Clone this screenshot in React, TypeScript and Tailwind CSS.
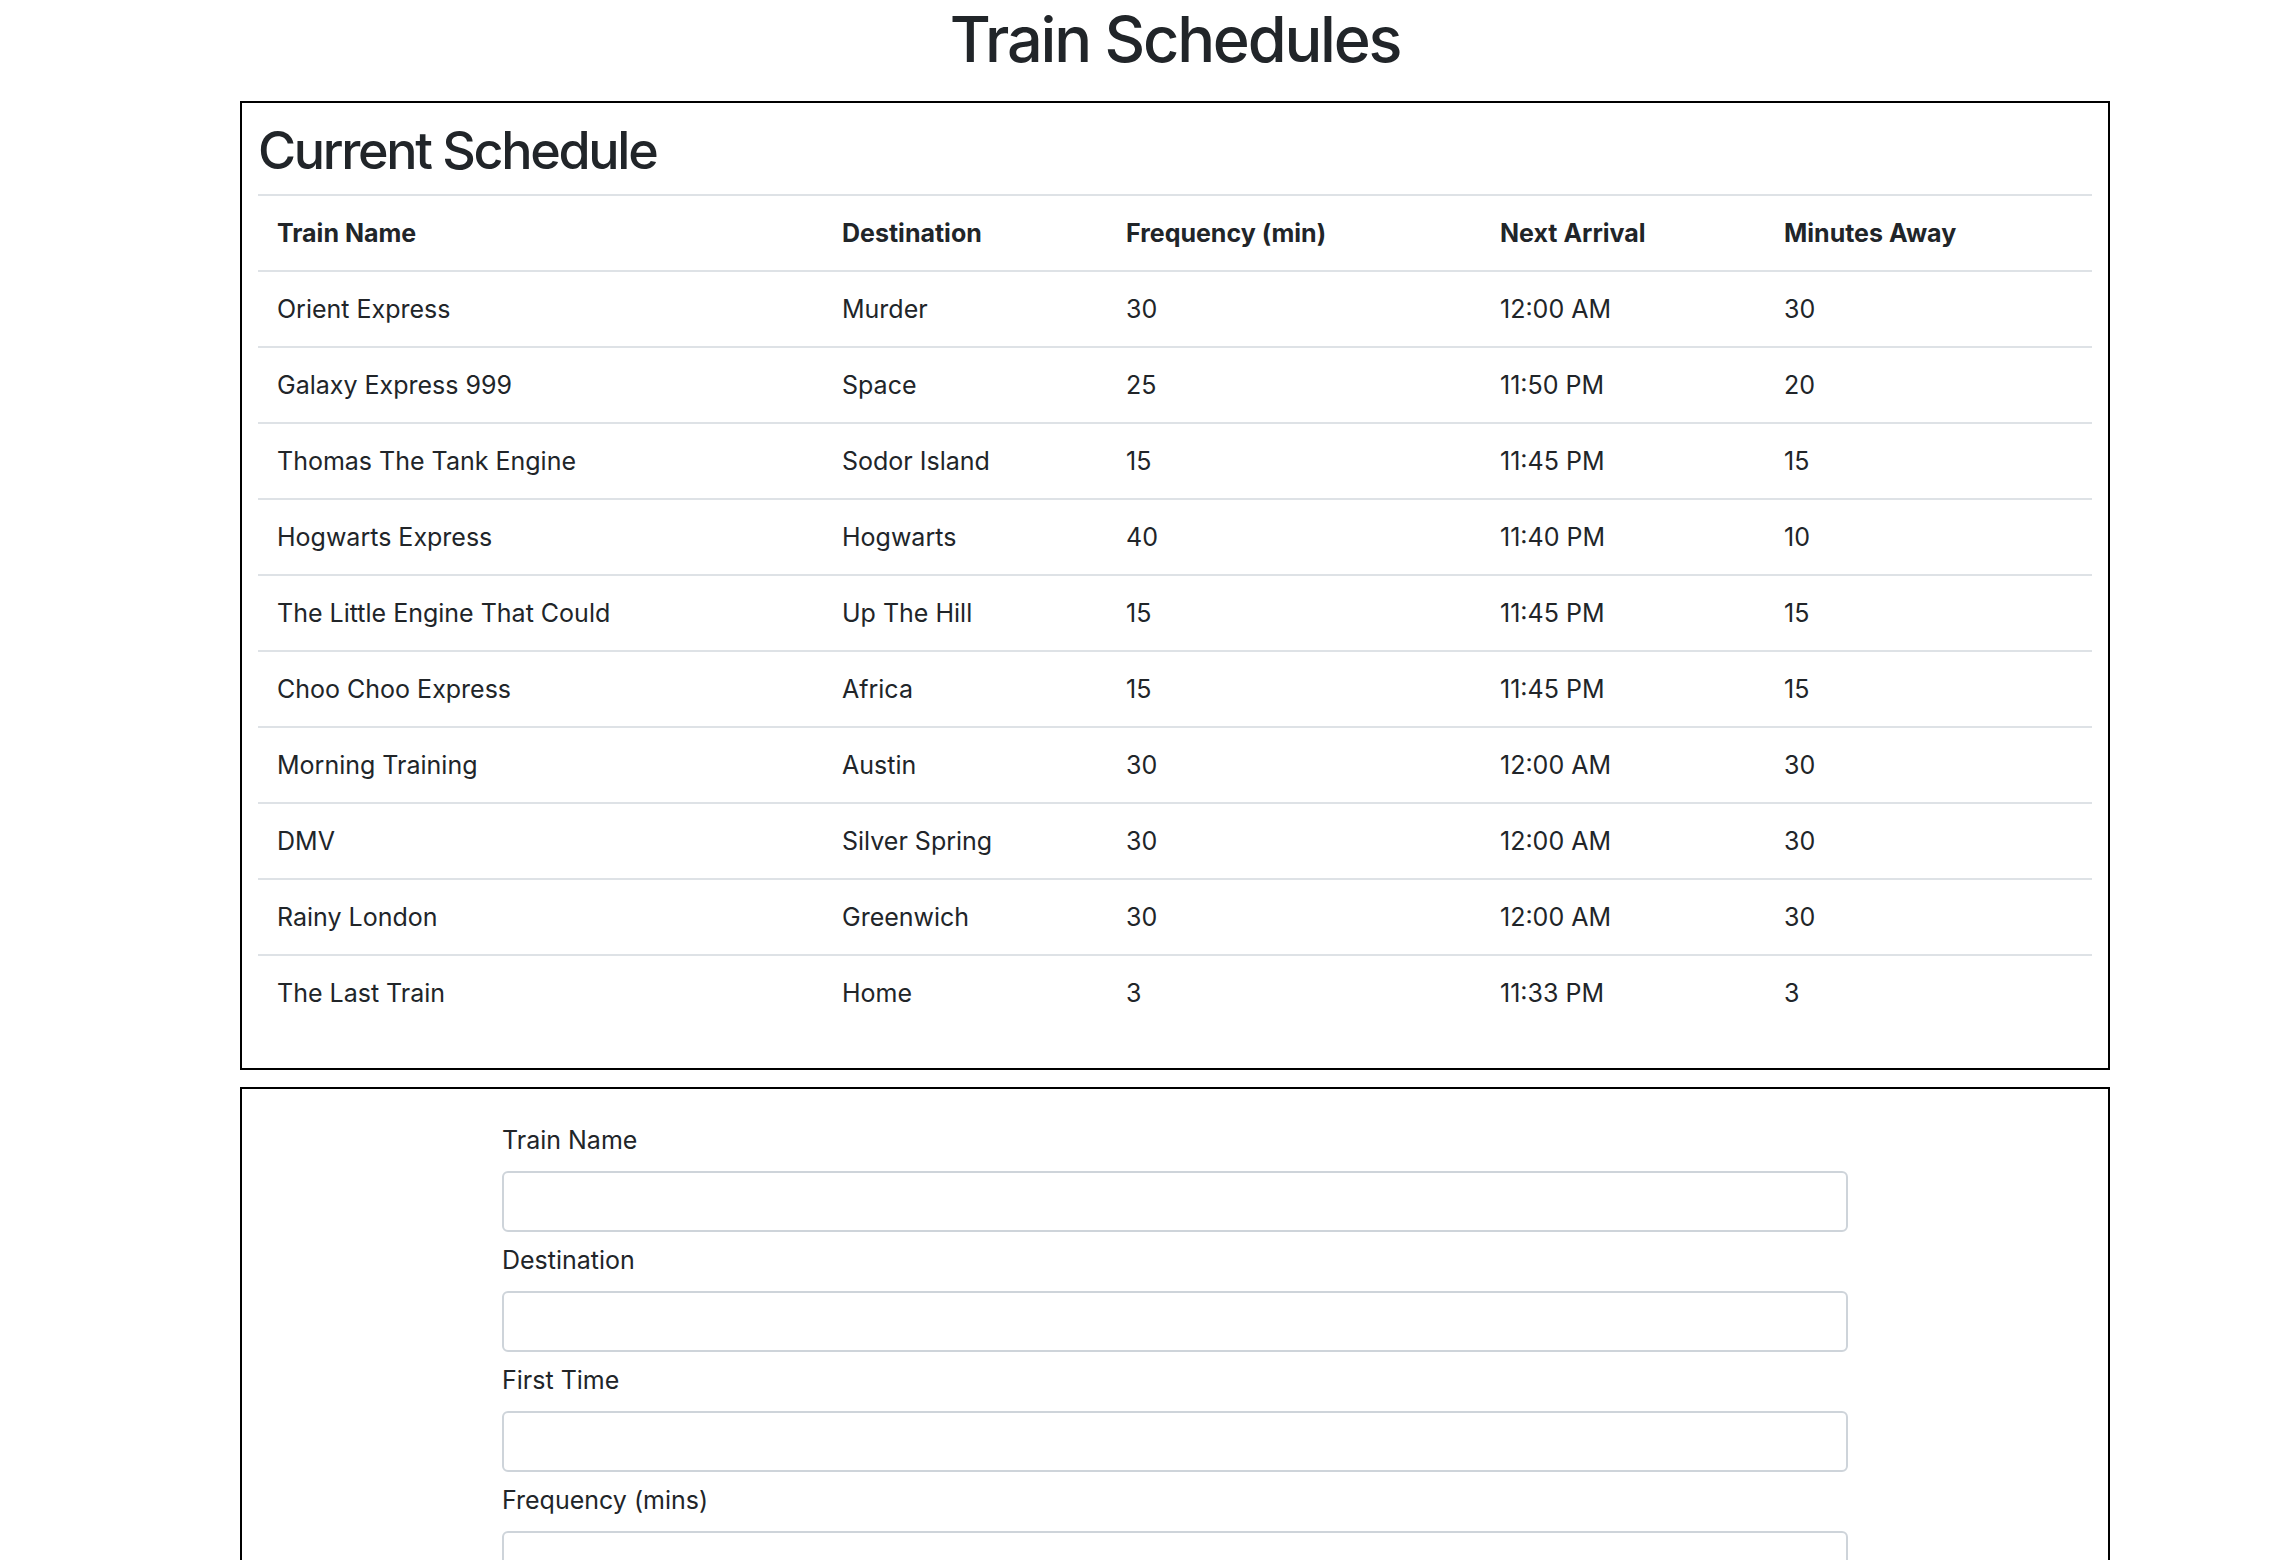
import React from 'react';

type Train = {
  name: string;
  destination: string;
  frequency: number;
  next: string;
  away: number;
};

const trains: Train[] = [
  { name: 'Orient Express', destination: 'Murder', frequency: 30, next: '12:00 AM', away: 30 },
  { name: 'Galaxy Express 999', destination: 'Space', frequency: 25, next: '11:50 PM', away: 20 },
  { name: 'Thomas The Tank Engine', destination: 'Sodor Island', frequency: 15, next: '11:45 PM', away: 15 },
  { name: 'Hogwarts Express', destination: 'Hogwarts', frequency: 40, next: '11:40 PM', away: 10 },
  { name: 'The Little Engine That Could', destination: 'Up The Hill', frequency: 15, next: '11:45 PM', away: 15 },
  { name: 'Choo Choo Express', destination: 'Africa', frequency: 15, next: '11:45 PM', away: 15 },
  { name: 'Morning Training', destination: 'Austin', frequency: 30, next: '12:00 AM', away: 30 },
  { name: 'DMV', destination: 'Silver Spring', frequency: 30, next: '12:00 AM', away: 30 },
  { name: 'Rainy London', destination: 'Greenwich', frequency: 30, next: '12:00 AM', away: 30 },
  { name: 'The Last Train', destination: 'Home', frequency: 3, next: '11:33 PM', away: 3 },
];

const fields = ['Train Name', 'Destination', 'First Time', 'Frequency (mins)'];

const cell = 'border-t-2 border-[#dee2e6] pl-[19px] pr-5 py-[19px] text-left align-top';

export default function App() {
  return (
    <div className="min-h-screen bg-white font-['Inter','Liberation_Sans',sans-serif] text-[25px] leading-[36px] text-[#212529]">
      <div className="ml-[240px] w-[1870px]">
        {/* Header */}
        <h1 className="text-center text-[63px] leading-[78px] font-medium tracking-[-2.2px]">Train Schedules</h1>

        {/* Schedule table */}
        <div className="mt-[23px] border-2 border-black px-[16px] pt-[17px] pb-[38px]">
          <h2 className="mb-[12px] text-[52px] leading-[1.2] font-medium tracking-[-2.3px]">Current Schedule</h2>
          <table className="w-full table-fixed border-collapse">
            <colgroup>
              <col className="w-[565px]" />
              <col className="w-[284px]" />
              <col className="w-[374px]" />
              <col className="w-[284px]" />
              <col className="w-[327px]" />
            </colgroup>
            <thead>
              <tr>
                <th className={`${cell} font-bold`}>Train Name</th>
                <th className={`${cell} font-bold`}>Destination</th>
                <th className={`${cell} font-bold`}>Frequency (min)</th>
                <th className={`${cell} font-bold`}>Next Arrival</th>
                <th className={`${cell} font-bold`}>Minutes Away</th>
              </tr>
            </thead>
            <tbody>
              {trains.map(t => (
                <tr key={t.name}>
                  <td className={cell}>{t.name}</td>
                  <td className={cell}>{t.destination}</td>
                  <td className={cell}>{t.frequency}</td>
                  <td className={cell}>{t.next}</td>
                  <td className={cell}>{t.away}</td>
                </tr>
              ))}
            </tbody>
          </table>
        </div>

        {/* Add train form */}
        <div className="mt-[17px] border-2 border-black pt-[33px] pb-[40px]">
          <form className="mx-auto w-[1346px]">
            {fields.map(f => (
              <div key={f} className="mb-[10px]">
                <label className="mb-[13px] block">{f}</label>
                <input
                  type="text"
                  className="block h-[61px] w-full rounded-[6px] border-2 border-[#ced4da] bg-white px-4 outline-none"
                />
              </div>
            ))}
            <button
              type="button"
              className="mt-4 rounded-[6px] bg-[#007bff] px-6 py-3 text-white"
            >
              Submit
            </button>
          </form>
        </div>
      </div>
    </div>
  );
}
